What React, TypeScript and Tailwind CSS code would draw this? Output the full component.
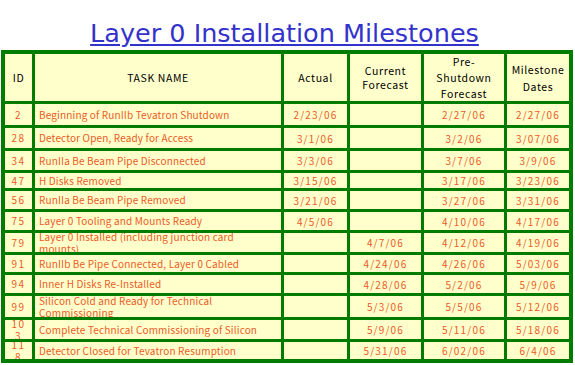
import React from 'react';

type Row = {
  id: string;
  task: string;
  actual: string;
  current: string;
  pre: string;
  milestone: string;
};

const rows: Row[] = [
  { id: '2', task: 'Beginning of RunIIb Tevatron Shutdown', actual: '2/23/06', current: '', pre: '2/27/06', milestone: '2/27/06' },
  { id: '28', task: 'Detector Open, Ready for Access', actual: '3/1/06', current: '', pre: '3/2/06', milestone: '3/07/06' },
  { id: '34', task: 'RunIIa Be Beam Pipe Disconnected', actual: '3/3/06', current: '', pre: '3/7/06', milestone: '3/9/06' },
  { id: '47', task: 'H Disks Removed', actual: '3/15/06', current: '', pre: '3/17/06', milestone: '3/23/06' },
  { id: '56', task: 'RunIIa Be Beam Pipe Removed', actual: '3/21/06', current: '', pre: '3/27/06', milestone: '3/31/06' },
  { id: '75', task: 'Layer 0 Tooling and Mounts Ready', actual: '4/5/06', current: '', pre: '4/10/06', milestone: '4/17/06' },
  { id: '79', task: 'Layer 0 Installed (including junction card mounts)', actual: '', current: '4/7/06', pre: '4/12/06', milestone: '4/19/06' },
  { id: '91', task: 'RunIIb Be Pipe Connected, Layer 0 Cabled', actual: '', current: '4/24/06', pre: '4/26/06', milestone: '5/03/06' },
  { id: '94', task: 'Inner H Disks Re-Installed', actual: '', current: '4/28/06', pre: '5/2/06', milestone: '5/9/06' },
  { id: '99', task: 'Silicon Cold and Ready for Technical Commissioning', actual: '', current: '5/3/06', pre: '5/5/06', milestone: '5/12/06' },
  { id: '103', task: 'Complete Technical Commissioning of Silicon', actual: '', current: '5/9/06', pre: '5/11/06', milestone: '5/18/06' },
  { id: '118', task: 'Detector Closed for Tevatron Resumption', actual: '', current: '5/31/06', pre: '6/02/06', milestone: '6/4/06' },
];

const cell = 'bg-[#ffffcc] overflow-hidden flex items-center';
const head = `${cell} justify-center text-center text-black text-[10.5px] tracking-[0.6px]`;
const date = `${cell} justify-center text-[#ec5a26] text-[10px] tracking-[1.2px]`;

export default function App() {
  return (
    <div
      className="w-[575px] h-[365px] bg-white overflow-hidden"
      style={{ fontFamily: '"Noto Sans CJK JP", "DejaVu Sans", sans-serif' }}
    >
      <h1
        className="h-[50px] pt-[19px] pr-[6px] text-center text-[25.5px] leading-[28px] text-[#3333cc] underline decoration-[2px] underline-offset-[2px]"
        style={{ fontFamily: '"Comic Sans MS", "DejaVu Sans", sans-serif' }}
      >
        Layer 0 Installation Milestones
      </h1>

      <div className="ml-[1px] w-[572px] bg-[#007d00] border-[4px] border-[#007d00] grid grid-cols-[27px_246px_63px_71px_80px_62px] grid-rows-[47px_21px_20px_19px_15px_18px_18px_19px_17px_18px_21px_19px_17px] gap-[3px]">
        <div className={head}>ID</div>
        <div className={head}>TASK NAME</div>
        <div className={head}>Actual</div>
        <div className={`${head} leading-[14px]`}>
          Current
          <br />
          Forecast
        </div>
        <div className={`${head} leading-[16px]`}>
          Pre-
          <br />
          Shutdown
          <br />
          Forecast
        </div>
        <div className={`${head} leading-[17px]`}>
          Milestone
          <br />
          Dates
        </div>

        {rows.map((r) => (
          <React.Fragment key={r.id}>
            <div className={`${cell} justify-center text-center text-[#ec5a26] text-[10px] leading-[12px] tracking-[1.5px] break-all px-[6px]`}>
              {r.id}
            </div>
            <div className={`${cell} pl-[4px] pr-[17px] text-[#ec5a26] text-[10px] leading-[12px] tracking-[0.15px]`}>
              {r.task}
            </div>
            <div className={date}>{r.actual}</div>
            <div className={date}>{r.current}</div>
            <div className={date}>{r.pre}</div>
            <div className={date}>{r.milestone}</div>
          </React.Fragment>
        ))}
      </div>
    </div>
  );
}
